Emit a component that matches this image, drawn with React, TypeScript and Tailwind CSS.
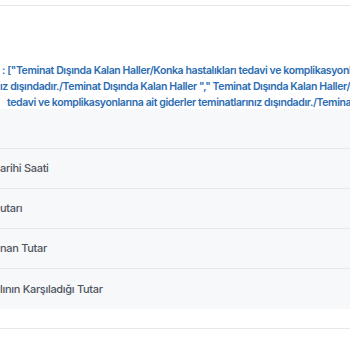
import React from 'react';

const rows = ['arihi Saati', 'utarı', 'nan Tutar', 'lının Karşıladığı Tutar'];

const lines = [
  { text: ': ["Teminat Dışında Kalan Haller/Konka hastalıkları tedavi ve komplikasyonlarına ait', cls: 'ml-[2px]' },
  { text: 'ız dışındadır./Teminat Dışında Kalan Haller "," Teminat Dışında Kalan Haller/Konka', cls: 'ml-[0px]' },
  { text: 'tedavi ve komplikasyonlarına ait giderler teminatlarınız dışındadır./Teminat Dışında', cls: 'ml-[7px]' },
];

const App: React.FC = () => {
  return (
    <div className="w-[350px] h-[350px] overflow-hidden bg-white" style={{ fontFamily: 'Inter, "Noto Sans", sans-serif' }}>
      <div className="h-[5px]" />
      <div className="border-t border-[#e3e5e8]">
        {/* açıklama */}
        <div className="h-[103px] pt-[57px] flex flex-col">
          {lines.map((l, i) => (
            <div key={i} className={`whitespace-nowrap text-[10.5px] tracking-[-0.38px] leading-[16px] font-semibold text-[#2b6cb2] ${l.cls}`}>
              {l.text}
            </div>
          ))}
        </div>

        <div className="bg-[#f7f8fa]">
          <div className="h-[40px] border-b border-[#e6e8eb]" />
          {rows.map((r, i) => (
            <div
              key={r}
              className={`h-[40px] flex items-center whitespace-nowrap text-[11px] tracking-[-0.3px] font-medium text-[#4f555e] ${i < rows.length - 1 ? 'border-b border-[#e6e8eb]' : ''}`}
            >
              <span>{r}</span>
            </div>
          ))}
        </div>
        <div className="h-[19px]" />
        <div className="border-t border-[#e6e8eb]" />
      </div>
    </div>
  );
};

export default App;
